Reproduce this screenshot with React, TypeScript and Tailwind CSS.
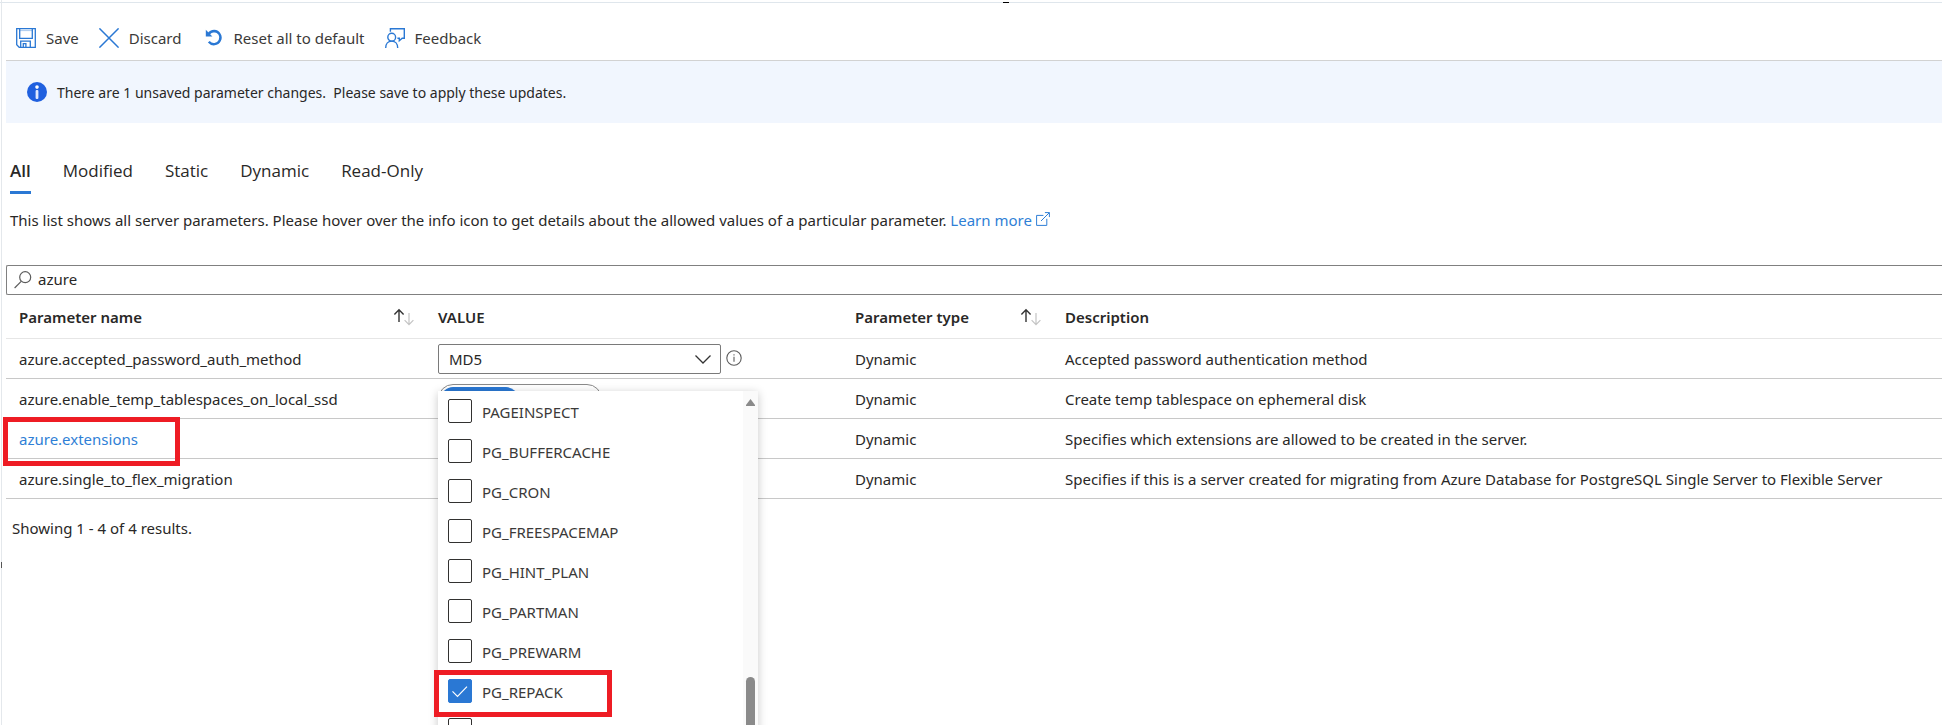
import type { ReactNode } from "react";

type Parameter = {
  name: string;
  description: string;
  link?: boolean;
  value?: ReactNode;
};

const extensions = [
  { name: "PAGEINSPECT" },
  { name: "PG_BUFFERCACHE" },
  { name: "PG_CRON" },
  { name: "PG_FREESPACEMAP" },
  { name: "PG_HINT_PLAN" },
  { name: "PG_PARTMAN" },
  { name: "PG_PREWARM" },
  { name: "PG_REPACK", checked: true },
];

const tabs = ["All", "Modified", "Static", "Dynamic", "Read-Only"];

function SaveIcon() {
  return (
    <svg viewBox="0 0 20 20" className="h-5 w-5 shrink-0" fill="none" stroke="#2a78d4" strokeWidth="1.3" aria-hidden="true">
      <path d="M.7.7h18.600v18.600H3.200L.7 16.800z" />
      <path d="M3.700.7v9.600h12.600V.7" />
      <path d="M4.700 19.300v-6.100h9.600v6.100M7.300 19.300v-3.600h2.600v3.600" />
      <path d="M3.700 2.600h12.600" strokeWidth=".4" />
    </svg>
  );
}

function DiscardIcon() {
  return (
    <svg viewBox="0 0 20 20" className="h-5 w-5 shrink-0" fill="none" stroke="#2a78d4" strokeWidth="1.5" aria-hidden="true">
      <path d="M.4.4l19.200 19.200M19.600.4L.4 19.600" />
    </svg>
  );
}

function ResetIcon() {
  return (
    <svg viewBox="-4 0 22 18" className="h-[18px] w-[22px] shrink-0" fill="none" aria-hidden="true">
      <path d="M3.600 5.200C5 2.900 7 2 9.200 2a6.600 6.600 0 1 1-5.400 10.800" stroke="#2a78d4" strokeWidth="2.400" />
      <path d="M.8.8v6.600h6.600z" fill="#2a78d4" />
    </svg>
  );
}

function FeedbackIcon() {
  return (
    <svg viewBox="0 0 20 20" className="h-5 w-5 shrink-0" fill="none" stroke="#2a78d4" strokeWidth="1.4" aria-hidden="true">
      <path d="M5.400 3.800V.7h13.900v9.500h-2.100l-2.900 2.500v-2.500h-1.900" />
      <circle cx="6.700" cy="9.200" r="3.900" />
      <path d="M.7 20c0-4 2.500-6.900 6-6.900s6 2.900 6 6.900" />
    </svg>
  );
}

function SearchIcon() {
  return (
    <svg viewBox="0 0 18 18" className="h-[18px] w-[18px] shrink-0" fill="none" stroke="#5c5c5c" strokeWidth="1.2" aria-hidden="true">
      <circle cx="11.200" cy="6.200" r="5.500" />
      <path d="M7.200 10.300L.6 17" />
    </svg>
  );
}

function ExternalIcon() {
  return (
    <svg viewBox="0 0 14 14" className="inline-block h-3.5 w-3.5 align-baseline" fill="none" stroke="#2f7fd6" strokeWidth="1" aria-hidden="true">
      <path d="M7.400 3.400H.6v10h10.200V6.800" />
      <path d="M5 9L13.300.7M8.900.6h4.500v4.500" />
    </svg>
  );
}

function SortIcon() {
  return (
    <svg viewBox="0 0 22 18" className="h-[18px] w-[22px] shrink-0" fill="none" aria-hidden="true">
      <path d="M6 14V2M1.400 6.400L6 1.800l4.600 4.600" stroke="#333" strokeWidth="1.400" />
      <path d="M16 5v11.400M11.600 12.200l4.400 4.400 4.400-4.400" stroke="#c4c4c4" strokeWidth="1.200" />
    </svg>
  );
}

function InfoOutline() {
  return (
    <svg viewBox="0 0 16 16" className="h-4 w-4" fill="none" stroke="#5c5c5c" aria-hidden="true">
      <circle cx="8" cy="8" r="7.200" strokeWidth="1.100" />
      <path d="M8 6.800v5M8 4.200v1.300" strokeWidth="1.100" />
    </svg>
  );
}

const checkbox =
  "peer h-6 w-6 appearance-none rounded-[2px] border border-[#323130] bg-white checked:border-[#2a78d4] checked:bg-[#2a78d4]";

function ExtensionMenu() {
  return (
    <div className="absolute -top-7 left-0 z-10 flex h-96 w-80 bg-white shadow-[0_2px_9px_rgba(0,0,0,0.22)]">
      <ul className="min-w-0 flex-1 overflow-hidden pl-2.5">
        {extensions.map((item) => (
          <li key={item.name} className="h-10 pt-[7px]">
            <label className="flex items-center gap-2.5">
              <span className="relative flex h-6 w-6 shrink-0">
                <input type="checkbox" defaultChecked={item.checked} className={checkbox} />
                <svg viewBox="0 0 24 24" className="pointer-events-none absolute inset-0 hidden h-6 w-6 peer-checked:block" fill="none" stroke="#fff" strokeWidth="1.2" aria-hidden="true">
                  <path d="M4.500 12.400l5 5L19 7.600" />
                </svg>
              </span>
              <span className="pt-0.5 text-[15px] leading-6 text-[#3b3a39]">{item.name}</span>
            </label>
          </li>
        ))}
        <li className="h-10 pt-[7px]">
          <input type="checkbox" aria-label="Next extension" className={checkbox} />
        </li>
      </ul>
      <div className="flex w-[15px] flex-col items-center bg-[#fafafa] pt-2" aria-hidden="true">
        <svg viewBox="0 0 9 7" className="h-[7px] w-[9px]" fill="#8a8a8a">
          <path d="M4.500 0L9 6v1H0V6z" />
        </svg>
        <div className="mt-[271px] w-[9px] flex-1 rounded-full bg-[#8a8a8a]" />
      </div>
    </div>
  );
}

const parameters: Parameter[] = [
  {
    name: "azure.accepted_password_auth_method",
    description: "Accepted password authentication method",
    value: (
      <div className="flex gap-[5px]">
        <div className="relative">
          <select aria-label="azure.accepted_password_auth_method" className="block h-[30px] w-[283px] appearance-none rounded-[2px] border border-[#7a7a7a] bg-white px-2.5 text-[15px] text-[#292827]">
            <option>MD5</option>
          </select>
          <svg viewBox="0 0 16 9" className="pointer-events-none absolute right-2.5 top-[11px] h-[9px] w-4" fill="none" stroke="#333" strokeWidth="1.3" aria-hidden="true">
            <path d="M.5.5L8 8 15.500.5" />
          </svg>
        </div>
        <button type="button" aria-label="Info" className="mt-1.5 h-4">
          <InfoOutline />
        </button>
      </div>
    ),
  },
  {
    name: "azure.enable_temp_tablespaces_on_local_ssd",
    description: "Create temp tablespace on ephemeral disk",
    value: (
      <button type="button" role="switch" aria-checked="true" aria-label="azure.enable_temp_tablespaces_on_local_ssd" className="flex h-[30px] w-[164px] rounded-full border border-[#8a8a8a] p-0.5">
        <span className="h-full w-[77px] rounded-full bg-[#2a78d4]" />
      </button>
    ),
  },
  {
    name: "azure.extensions",
    description: "Specifies which extensions are allowed to be created in the server.",
    link: true,
    value: <ExtensionMenu />,
  },
  {
    name: "azure.single_to_flex_migration",
    description: "Specifies if this is a server created for migrating from Azure Database for PostgreSQL Single Server to Flexible Server",
  },
];

const headCell = "h-11 border-b border-[#e6e6e6] p-0 text-left font-semibold";
const bodyCell = "h-10 border-b border-[#c8c8c8] p-0";

export default function App() {
  return (
    <div className="relative h-screen overflow-hidden bg-white pt-0.5 font-['Noto_Sans','Open_Sans',sans-serif] text-[15px] leading-5 text-[#292827]">
      <div className="absolute inset-x-0 top-0.5 h-px bg-[#dfe6ec]" />
      <div className="absolute left-1/2 top-0.5 ml-8 h-px w-1.5 bg-black" />
      <div className="absolute inset-y-0 left-px w-px bg-[#e4e8ec]" />
      <div className="absolute left-px top-[562px] h-1.5 w-px bg-[#555]" />

      <div className="ml-1.5">
        <div role="toolbar" className="flex h-[59px] items-center gap-5 border-b border-[#d2d2d2] pl-2.5 pt-3.5 text-[#3b3a39]">
          <button type="button" className="flex items-center gap-2.5"><SaveIcon />Save</button>
          <button type="button" className="flex items-center gap-2.5"><DiscardIcon />Discard</button>
          <button type="button" className="flex items-center gap-2.5"><ResetIcon />Reset all to default</button>
          <button type="button" className="flex items-center gap-2.5"><FeedbackIcon />Feedback</button>
        </div>

        <div role="status" className="flex h-[62px] items-center gap-2.5 bg-[#f1f6fe] pl-[21px] text-sm">
          <svg viewBox="0 0 20 20" className="h-5 w-5 shrink-0" aria-hidden="true">
            <circle cx="10" cy="10" r="10" fill="#2060df" />
            <circle cx="10" cy="5.100" r="1.800" fill="#fff" />
            <rect x="8.600" y="8" width="2.800" height="9" rx="1" fill="#dfe9ff" />
          </svg>
          <p className="whitespace-pre pt-0.5">There are 1 unsaved parameter changes.  Please save to apply these updates.</p>
        </div>

        <div role="tablist" className="mt-9 flex gap-8 pl-1 font-['Open_Sans','Noto_Sans',sans-serif] text-[17px] leading-6">
          {tabs.map((tab, i) => (
            <button
              key={tab}
              type="button"
              role="tab"
              aria-selected={i === 0}
              className={i === 0 ? "h-[35px] border-b-[3px] border-[#2a78d4] pb-2 font-semibold" : "h-[35px] border-b-[3px] border-transparent pb-2"}
            >
              {tab}
            </button>
          ))}
        </div>

        <p className="mt-4 pl-1">
          This list shows all server parameters. Please hover over the info icon to get details about the allowed values of a particular parameter.{" "}
          <a href="#learn-more" className="text-[#2f7fd6]">Learn more <ExternalIcon /></a>
        </p>

        <div className="mt-[35px] flex h-[30px] items-center gap-1.5 rounded-l-[2px] border border-r-0 border-[#808080] pl-[7px]">
          <SearchIcon />
          <input type="text" aria-label="Search parameters" defaultValue="azure" className="h-full min-w-0 flex-1 bg-transparent pb-0.5 outline-none" />
        </div>

        <table className="w-full table-fixed border-separate border-spacing-0">
          <colgroup>
            <col className="w-[432px]" />
            <col className="w-[417px]" />
            <col className="w-[210px]" />
            <col />
          </colgroup>
          <thead>
            <tr>
              <th className={headCell}>
                <div className="flex items-center justify-between pl-[13px] pr-[23px]">Parameter name<SortIcon /></div>
              </th>
              <th className={headCell}>VALUE</th>
              <th className={headCell}>
                <div className="flex items-center justify-between pr-[23px]">Parameter type<SortIcon /></div>
              </th>
              <th className={headCell}>Description</th>
            </tr>
          </thead>
          <tbody>
            {parameters.map((p) => (
              <tr key={p.name}>
                <td className={bodyCell}>
                  <div className="relative pl-[13px]">
                    {p.link ? <a href="#extensions" className="text-[#2f7fd6]">{p.name}</a> : p.name}
                    {p.link && <div className="pointer-events-none absolute -left-[3px] -top-3 h-[49px] w-[177px] border-[5px] border-[#ee1c24]" />}
                  </div>
                </td>
                <td className={bodyCell}>
                  <div className="relative h-[39px] pt-[5px]">
                    {p.value}
                    {p.link && <div className="pointer-events-none absolute -left-1 top-[251px] z-20 h-[47px] w-[178px] border-[5px] border-[#ee1c24]" />}
                  </div>
                </td>
                <td className={bodyCell}>Dynamic</td>
                <td className={bodyCell}>{p.description}</td>
              </tr>
            ))}
          </tbody>
        </table>

        <p className="mt-[19px] pl-1.5">Showing 1 - 4 of 4 results.</p>
      </div>
    </div>
  );
}
